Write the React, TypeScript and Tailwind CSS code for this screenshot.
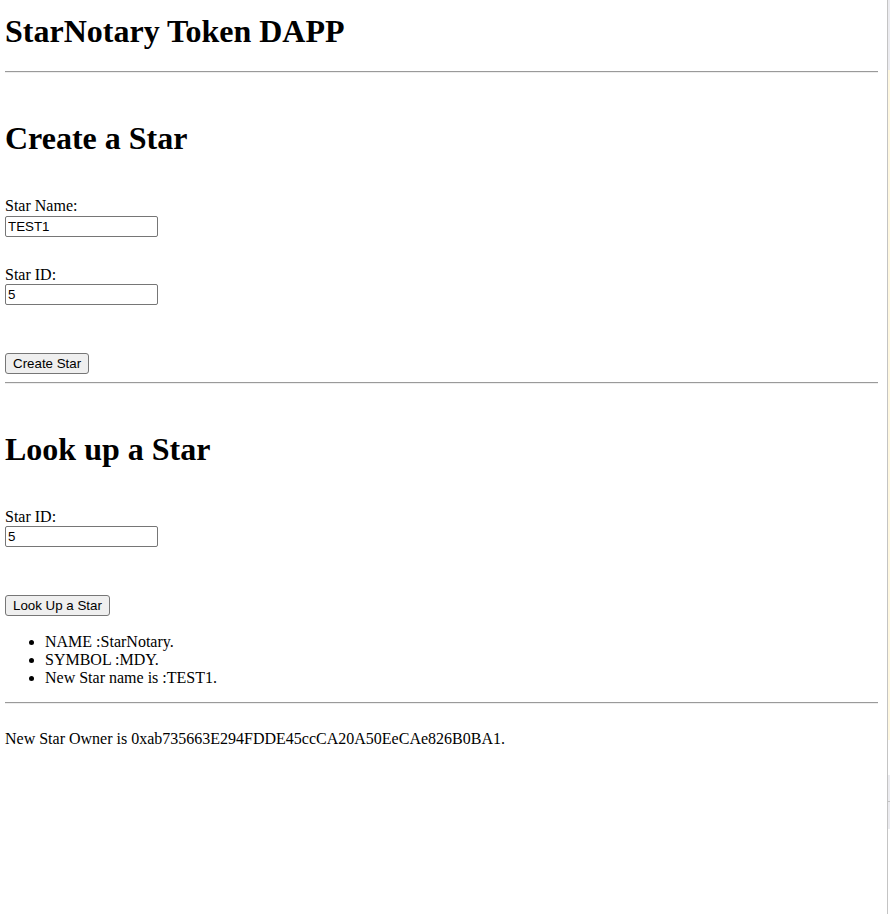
import React from 'react'

const serif = 'font-["Liberation_Serif","Times_New_Roman",serif]'
const inputCls =
  'block w-[153px] h-[21px] border border-[#767676] rounded-[2px] bg-white px-[2px] text-[13.33px] leading-[17px] text-black font-["Liberation_Sans",Arial,sans-serif] outline-none'
const buttonCls =
  'block h-[21px] border border-[#767676] rounded-[3px] bg-[#efefef] px-[7px] text-[13.33px] leading-[17px] text-black font-["Liberation_Sans",Arial,sans-serif]'

function Rule({ className = '' }: { className?: string }) {
  return <div className={`mr-[9px] h-[2px] border-t border-[#9a9a9a] border-b border-b-[#eeeeee] ${className}`} />
}

export default function App() {
  return (
    <div className="flex h-[914px] w-[890px] overflow-hidden bg-white">
      <div className={`flex-1 pl-[5px] text-[16px] leading-[18px] text-black ${serif}`}>
        <h1 className="mt-[13px] text-[32px] font-bold leading-[37px]">StarNotary Token DAPP</h1>
        <Rule className="mt-[21px]" />

        <h1 className="mt-[47px] text-[32px] font-bold leading-[37px]">Create a Star</h1>
        <div className="mt-[40px]">Star Name:</div>
        <input className={`mt-[1px] ${inputCls}`} defaultValue="TEST1" />
        <div className="mt-[29px]">Star ID:</div>
        <input className={inputCls} defaultValue="5" />
        <button className={`mt-[48px] ${buttonCls}`}>Create Star</button>
        <Rule className="mt-[8px]" />

        <h1 className="mt-[47px] text-[32px] font-bold leading-[37px]">Look up a Star</h1>
        <div className="mt-[40px]">Star ID:</div>
        <input className={inputCls} defaultValue="5" />
        <button className={`mt-[48px] ${buttonCls}`}>Look Up a Star</button>

        <ul className="mt-[17px] list-disc pl-10">
          <li className="h-[18px] leading-[18px]">NAME :StarNotary.</li>
          <li className="h-[18px] leading-[18px]">SYMBOL :MDY.</li>
          <li className="h-[18px] leading-[18px]">New Star name is :TEST1.</li>
        </ul>
        <Rule className="mt-[15px]" />

        <p className="mt-[26px]">New Star Owner is 0xab735663E294FDDE45ccCA20A50EeCAe826B0BA1.</p>
      </div>

      {/* side strip at the right edge */}
      <div className="flex w-[3px] flex-col border-l border-[#c4c4c4]">
        <div className="h-[70px] bg-[#ececf0]" />
        <div className="h-[670px] bg-[#fff8e1]" />
        <div className="h-[35px] bg-white" />
        <div className="h-[26px] bg-[#ececf0]" />
        <div className="h-[28px] bg-[#ececf0] border-t border-[#c4c4c4]" />
        <div className="flex-1 bg-white" />
      </div>
    </div>
  )
}
